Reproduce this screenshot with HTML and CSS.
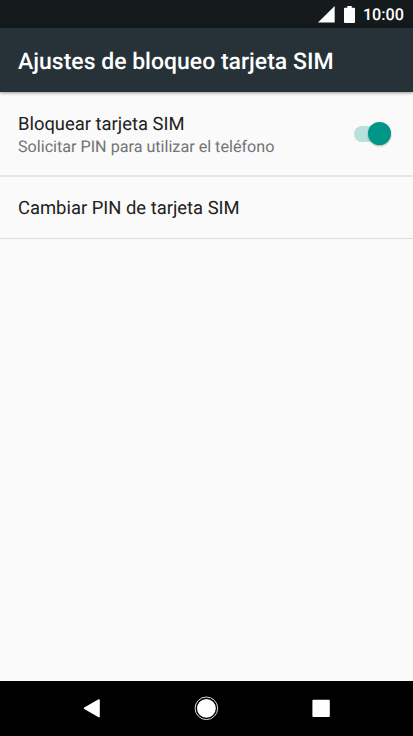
FILE: index.html
```
<!DOCTYPE html>
<html lang="es">
<head>
    <meta charset="UTF-8">
    <meta name="viewport" content="width=device-width, initial-scale=1.0">
    <title>Ajustes de bloqueo tarjeta SIM</title>
    <link rel="stylesheet" href="styles.css">
</head>
<body>
    <div class="status-bar">
        <svg class="signal" width="17" height="17" viewBox="0 0 17 17"><path d="M16.7 0v16.5H0z"/></svg>
        <svg class="battery" width="11" height="17" viewBox="0 0 11 17"><path d="M3.3 0h4.4v1.7h2.3a1 1 0 0 1 1 1V16a1 1 0 0 1-1 1H1a1 1 0 0 1-1-1V2.7a1 1 0 0 1 1-1h2.3z"/></svg>
        <span class="time">10:00</span>
    </div>

    <header class="app-bar">
        <h1>Ajustes de bloqueo tarjeta SIM</h1>
    </header>

    <main class="settings">
        <label class="setting lock">
            <span class="text">
                <span class="title">Bloquear tarjeta SIM</span>
                <span class="summary">Solicitar PIN para utilizar el teléfono</span>
            </span>
            <input type="checkbox" class="switch" checked>
        </label>
        <div class="setting change">
            <span class="title">Cambiar PIN de tarjeta SIM</span>
        </div>
    </main>

    <nav class="nav-bar">
        <svg width="24" height="24" viewBox="0 0 24 24"><path class="back" d="M4.6 12.3 19 4v16.6z"/></svg>
        <svg width="26" height="26" viewBox="0 0 26 26"><circle cx="12.4" cy="13.3" r="11.3" class="ring"/><circle cx="12.4" cy="13.3" r="9.4"/></svg>
        <svg width="24" height="24" viewBox="0 0 24 24"><rect x="3.4" y="3.7" width="17.4" height="17.2" rx="1"/></svg>
    </nav>
</body>
</html>
```

FILE: styles.css
```
* {
    box-sizing: border-box;
}
body {
    margin: 0;
    height: 736px;
    display: flex;
    flex-direction: column;
    background-color: #fafafa;
    color: #212121;
    font-family: Roboto, sans-serif;
    text-rendering: geometricPrecision;
    overflow: hidden;
}
svg {
    display: block;
    fill: #fff;
}
.status-bar {
    height: 28px;
    padding-right: 9px;
    display: flex;
    align-items: center;
    justify-content: flex-end;
    background-color: #14191c;
}
.battery {
    margin: 0 8px 0 9px;
}
.time {
    color: #fff;
    font-size: 16.2px;
    font-weight: 500;
    line-height: 28px;
    padding-top: 1px;
}
.app-bar {
    height: 64px;
    padding: 2px 18px 0;
    display: flex;
    align-items: center;
    background-color: #263238;
    box-shadow: 0 1px 3px rgba(0,0,0,0.4);
}
h1 {
    margin: 0;
    color: #fff;
    font-size: 23px;
    font-weight: 500;
    white-space: nowrap;
}
.settings {
    flex: 1;
}
.setting {
    display: flex;
    align-items: center;
    justify-content: space-between;
    padding: 2px 22.5px 0 18px;
    border-bottom: 1px solid #dcdcdc;
}
.lock {
    height: 85px;
    border-bottom: 2px solid #e6e6e6;
}
.change {
    height: 62px;
}
.title {
    display: block;
    font-size: 18.4px;
    line-height: 24px;
    white-space: nowrap;
}
.lock .title {
    padding-top: 1px;
    line-height: 23px;
}
.change .title {
    padding-top: 1px;
}
.summary {
    display: block;
    color: #737373;
    font-size: 16.15px;
    line-height: 22px;
    white-space: nowrap;
}
.switch {
    appearance: none;
    position: relative;
    width: 37px;
    height: 16px;
    margin: 0 0 2px;
    border-radius: 8px;
    background-color: #b8e0dc;
}
.switch::after {
    content: "";
    position: absolute;
    top: -4px;
    right: 0;
    width: 23px;
    height: 23px;
    border-radius: 50%;
    background-color: #009688;
    box-shadow: 0 1px 2px rgba(0,0,0,0.3);
}
.nav-bar {
    height: 55px;
    display: flex;
    align-items: center;
    justify-content: space-between;
    padding: 0 80px 1px;
    background-color: #000;
}
.back {
    stroke: #fff;
    stroke-width: 1.6;
    stroke-linejoin: round;
}
.ring {
    fill: none;
    stroke: #ddd;
    stroke-width: 1;
}
```
